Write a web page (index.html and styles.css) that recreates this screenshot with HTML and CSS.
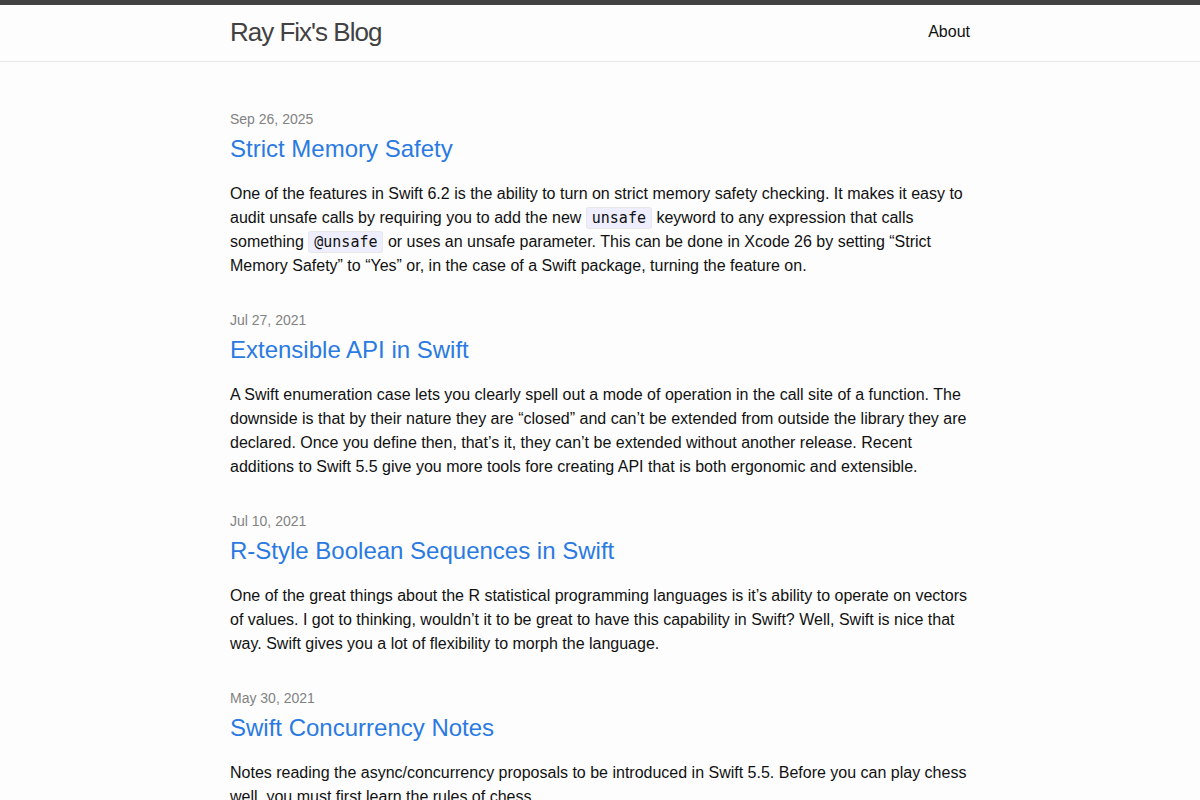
FILE: index.html
```html
<!DOCTYPE html>
<html lang="en">
<head>
<meta charset="utf-8">
<title>Ray Fix's Blog</title>
<link rel="stylesheet" href="styles.css">
</head>
<body>
<header class="site-header">
  <div class="wrapper header-row">
    <a class="site-title" href="#">Ray Fix's Blog</a>
    <nav class="site-nav"><a class="page-link" href="#">About</a></nav>
  </div>
</header>
<main class="page-content">
  <div class="wrapper">
    <ul class="post-list">
      <li>
        <span class="post-meta">Sep 26, 2025</span>
        <h3><a class="post-link" href="#">Strict Memory Safety</a></h3>
        <p>One of the features in Swift 6.2 is the ability to turn on strict memory safety checking. It makes it easy to audit unsafe calls by requiring you to add the new <code>unsafe</code> keyword to any expression that calls something <code>@unsafe</code> or uses an unsafe parameter. This can be done in Xcode 26 by setting “Strict Memory Safety” to “Yes” or, in the case of a Swift package, turning the feature on.</p>
      </li>
      <li>
        <span class="post-meta">Jul 27, 2021</span>
        <h3><a class="post-link" href="#">Extensible API in Swift</a></h3>
        <p>A Swift enumeration case lets you clearly spell out a mode of operation in the call site of a function. The downside is that by their nature they are “closed” and can’t be extended from outside the library they are declared. Once you define then, that’s it, they can’t be extended without another release. Recent additions to Swift 5.5 give you more tools fore creating API that is both ergonomic and extensible.</p>
      </li>
      <li>
        <span class="post-meta">Jul 10, 2021</span>
        <h3><a class="post-link" href="#">R-Style Boolean Sequences in Swift</a></h3>
        <p>One of the great things about the R statistical programming languages is it’s ability to operate on vectors of values. I got to thinking, wouldn’t it to be great to have this capability in Swift? Well, Swift is nice that way. Swift gives you a lot of flexibility to morph the language.</p>
      </li>
      <li>
        <span class="post-meta">May 30, 2021</span>
        <h3><a class="post-link" href="#">Swift Concurrency Notes</a></h3>
        <p>Notes reading the async/concurrency proposals to be introduced in Swift 5.5. Before you can play chess well, you must first learn the rules of chess.</p>
      </li>
    </ul>
  </div>
</main>
</body>
</html>
```

FILE: styles.css
```css
* { box-sizing: border-box; }
html, body { margin: 0; padding: 0; }
body {
  font: 400 16px/1.5 "Liberation Sans", Arial, Helvetica, sans-serif;
  color: #111111;
  background: #fdfdfd;
}
a { text-decoration: none; }
.wrapper {
  max-width: 800px;
  margin: 0 auto;
  padding: 0 30px;
}
.site-header {
  border-top: 5px solid #424242;
  border-bottom: 1px solid #e8e8e8;
  min-height: 62px;
}
.header-row {
  display: flex;
  justify-content: space-between;
  align-items: flex-start;
}
.site-title {
  font-size: 26px;
  font-weight: 300;
  line-height: 54px;
  letter-spacing: -1px;
  color: #424242;
}
.site-nav { line-height: 54px; }
.page-link { color: #111111; }
.page-content { padding: 45px 0 30px; }
.post-list {
  list-style: none;
  margin: 0;
  padding: 0;
}
.post-list > li { margin-bottom: 30px; }
.post-meta {
  font-size: 14px;
  color: #828282;
}
.post-list h3 {
  font-size: 24px;
  font-weight: 400;
  line-height: 36px;
  margin: 0 0 15px;
}
.post-link { color: #2a7ae2; }
.post-list p { margin: 0; }
code {
  font-family: "DejaVu Sans Mono", monospace;
  font-size: 15px;
  background: #eeeeff;
  border: 1px solid #e8e8e8;
  border-radius: 3px;
  padding: 1px 5px;
}
```
